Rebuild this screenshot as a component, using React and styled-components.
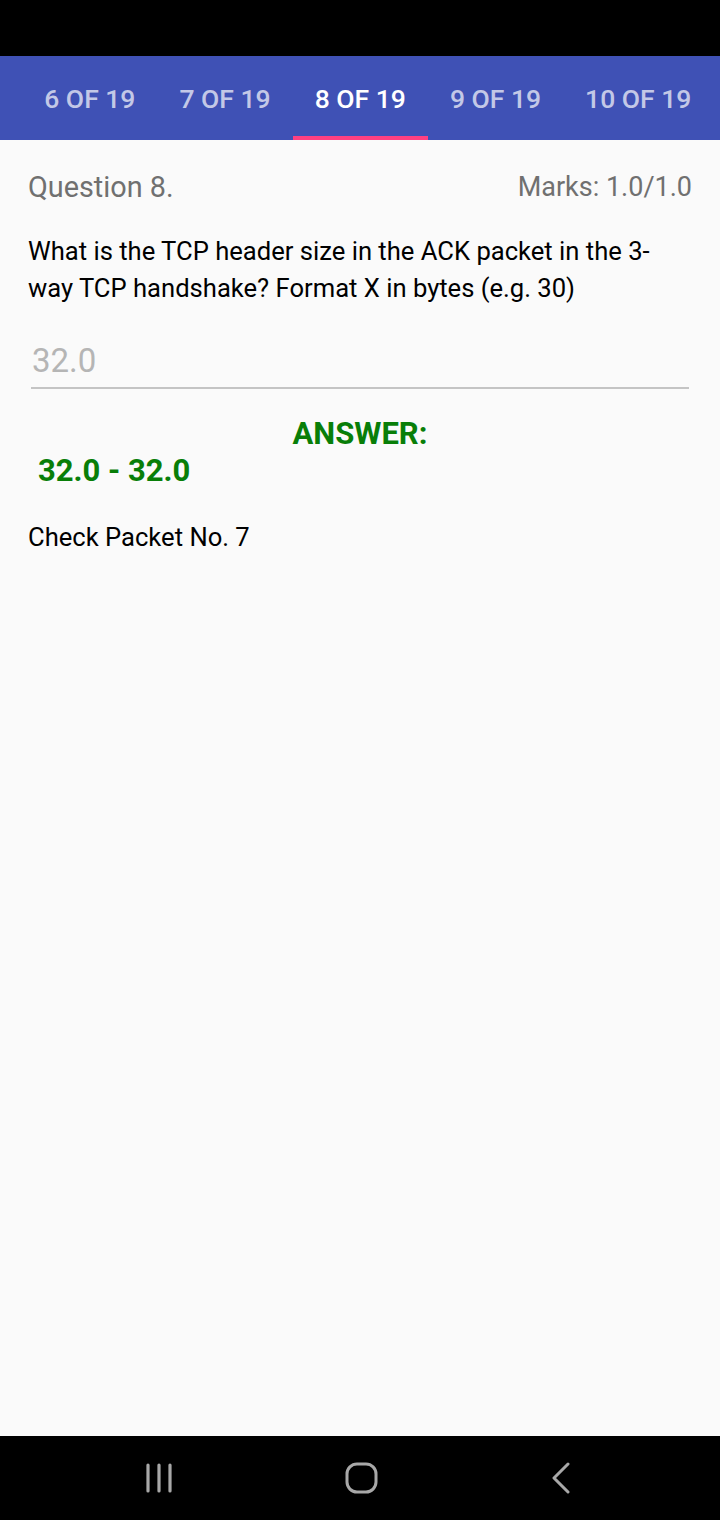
import React from "react";
import styled, { createGlobalStyle } from "styled-components";

const Global = createGlobalStyle`
  html, body { margin: 0; padding: 0; background: #000; }
  body { font-family: Roboto, "Noto Sans", "Liberation Sans", sans-serif; }
  * { box-sizing: border-box; }
`;

const Screen = styled.div`
  width: 720px;
  height: 1520px;
  display: flex;
  flex-direction: column;
  background: #fafafa;
  overflow: hidden;
`;

const StatusBar = styled.div`
  height: 56px;
  background: #000;
  flex: none;
`;

const TabBar = styled.div`
  height: 84px;
  background: #3f51b5;
  flex: none;
  display: flex;
  overflow: hidden;
`;

const TabRow = styled.div`
  display: flex;
  margin-left: -113px;
  height: 100%;
`;

const Tab = styled.div`
  position: relative;
  flex: none;
  min-width: 135px;
  padding: 0 22px;
  height: 100%;
  display: flex;
  align-items: center;
  justify-content: center;
  font-size: 26.5px;
  font-weight: 500;
  white-space: nowrap;
  color: ${(p) => (p.$active ? "#ffffff" : "rgba(255,255,255,0.7)")};
  &::after {
    content: "";
    display: ${(p) => (p.$active ? "block" : "none")};
    position: absolute;
    left: 0;
    right: 0;
    bottom: 0;
    height: 4px;
    background: #ff4081;
  }
`;

const Content = styled.div`
  flex: 1;
  padding: 28px 28px 0 28px;
  display: flex;
  flex-direction: column;
`;

const HeaderRow = styled.div`
  display: flex;
  justify-content: space-between;
  align-items: center;
  color: #707070;
  line-height: 38px;
`;

const HeaderTitle = styled.span`
  font-size: 28.8px;
`;

const HeaderMarks = styled.span`
  font-size: 27px;
`;

const QuestionText = styled.p`
  margin: 27px 0 0 0;
  font-size: 25.6px;
  line-height: 37px;
  color: #000;
`;

const AnswerInput = styled.div`
  margin: 35px 3px 0 3px;
  padding: 0 0 7px 1px;
  border-bottom: 2px solid #c4c4c4;
  font-size: 33px;
  line-height: 38px;
  color: #b5b5b5;
`;

const AnswerLabel = styled.div`
  margin-top: 27px;
  text-align: center;
  font-size: 31px;
  line-height: 36px;
  font-weight: 700;
  color: #087e08;
`;

const AnswerValue = styled.div`
  margin-top: 1px;
  padding-left: 10px;
  font-size: 31px;
  line-height: 36px;
  font-weight: 700;
  color: #087e08;
`;

const Hint = styled.div`
  margin-top: 30px;
  font-size: 25.6px;
  line-height: 36px;
  color: #000;
`;

const NavBar = styled.div`
  height: 84px;
  background: #000;
  flex: none;
  display: flex;
  align-items: center;
  justify-content: center;
  gap: 111px;
`;

const NavButton = styled.div`
  width: 90px;
  display: flex;
  justify-content: center;
  align-items: center;
`;

export default function App() {
  const tabs = [5, 6, 7, 8, 9, 10];
  return (
    <>
      <Global />
      <Screen>
        <StatusBar />
        <TabBar>
          <TabRow>
            {tabs.map((n) => (
              <Tab key={n} $active={n === 8}>
                {n} OF 19
              </Tab>
            ))}
          </TabRow>
        </TabBar>
        <Content>
          <HeaderRow>
            <HeaderTitle>Question 8.</HeaderTitle>
            <HeaderMarks>Marks: 1.0/1.0</HeaderMarks>
          </HeaderRow>
          <QuestionText>
            What is the TCP header size in the ACK packet in the 3-
            <br />
            way TCP handshake? Format X in bytes (e.g. 30)
          </QuestionText>
          <AnswerInput>32.0</AnswerInput>
          <AnswerLabel>ANSWER:</AnswerLabel>
          <AnswerValue>32.0 - 32.0</AnswerValue>
          <Hint>Check Packet No. 7</Hint>
        </Content>
        <NavBar>
          <NavButton>
            <svg width="28" height="30" viewBox="0 0 28 30">
              <g stroke="#a8a8a8" strokeWidth="3.2" strokeLinecap="round">
                <line x1="3" y1="2" x2="3" y2="28" />
                <line x1="14" y1="2" x2="14" y2="28" />
                <line x1="25" y1="2" x2="25" y2="28" />
              </g>
            </svg>
          </NavButton>
          <NavButton>
            <svg width="34" height="32" viewBox="0 0 34 32" style={{ marginLeft: 4 }}>
              <rect x="2" y="2" width="29" height="28" rx="10" fill="none" stroke="#a8a8a8" strokeWidth="3" />
            </svg>
          </NavButton>
          <NavButton>
            <svg width="22" height="32" viewBox="0 0 22 32">
              <polyline points="18,2 4,16 18,30" fill="none" stroke="#a8a8a8" strokeWidth="3" strokeLinecap="round" strokeLinejoin="round" />
            </svg>
          </NavButton>
        </NavBar>
      </Screen>
    </>
  );
}
